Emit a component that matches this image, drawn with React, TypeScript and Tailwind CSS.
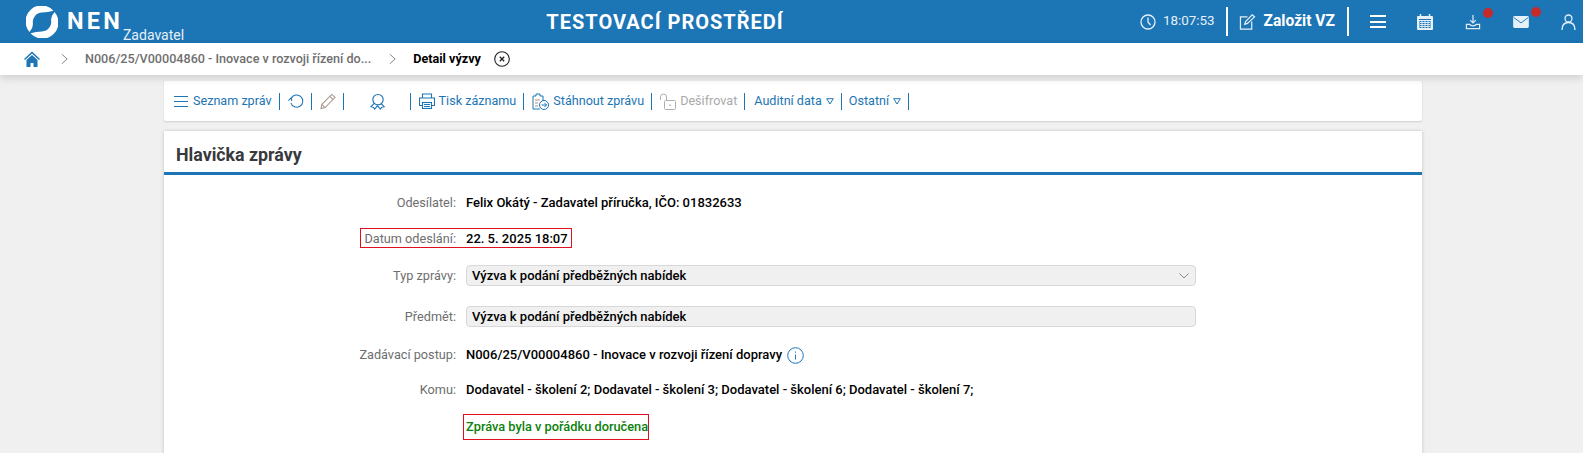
import React from 'react';

const Sep = ({ className }: { className: string }) => <span className={`w-px h-[17px] bg-[#1c75b5] shrink-0 ${className}`} />;

const Logo = () => (
  <svg width="32" height="32" viewBox="0 0 32 32" fill="white">
    <path d="M3.500 26A16 16 0 0 1 27.500 4.800Q22 6.500 16 6.500A9.500 9.500 0 0 0 7 18Q7 22 3.500 26z" />
    <path d="M3.500 26A16 16 0 0 1 27.500 4.800Q22 6.500 16 6.500A9.500 9.500 0 0 0 7 18Q7 22 3.500 26z" transform="rotate(180 16 16)" />
  </svg>
);

const Row = ({ label, children, className }: { label: string; children: React.ReactNode; className: string }) => (
  <div className={`flex items-center ${className}`}>
    <span className="w-[302px] pr-[10px] text-right text-[12.7px] text-[#6e6e6e] shrink-0">{label}</span>
    {children}
  </div>
);

const Box = ({ children }: { children?: React.ReactNode }) => (
  <div className="w-[730px] h-[21px] flex items-center justify-between pl-[5px] pr-[6px] bg-[#f0f0f0] border border-[#d8d8d8] rounded-[4px] font-medium text-black">
    {children}
  </div>
);

export default function App() {
  return (
    <div className="h-[453px] overflow-hidden bg-[#f0f0f0] text-[13px] font-['Roboto',sans-serif]">
      <header className="h-[43px] bg-[#1c75b5] flex items-center text-white">
        <div className="ml-[26px] flex items-center">
          <Logo />
          <span className="ml-[9px] text-[23.500px] leading-none font-bold tracking-[3.200px]">NEN</span>
          <span className="mt-[26px] text-[14px] leading-none text-[#e6f0f8]">Zadavatel</span>
        </div>
        <div className="flex-1 pl-[6px] text-center text-[20px] font-bold tracking-[1px]">TESTOVACÍ PROSTŘEDÍ</div>
        <div className="flex items-center mr-[7px]">
          <svg width="16" height="16" viewBox="0 0 16 16" fill="none" stroke="#e6f0f8" strokeWidth="1.300">
            <circle cx="8" cy="8" r="7" />
            <path d="M8 3.500V8l2.500 3" />
          </svg>
          <span className="ml-[7px] text-[13.400px] text-[#e6f0f8]">18:07:53</span>
          <span className="ml-[11px] w-[2px] h-[29px] bg-white" />
          <svg className="ml-[11px]" width="17" height="16" viewBox="0 0 18 17" fill="none" stroke="#e6f0f8" strokeWidth="1.300">
            <path d="M9 3H1.500v13h12V8" />
            <path d="M6 11l1-3 7-7 2.500 2-7.500 7z" />
          </svg>
          <span className="ml-[8px] text-[15.600px] font-bold">Založit VZ</span>
          <span className="ml-[12px] w-[2px] h-[29px] bg-white" />
          <span className="ml-[21px] w-[16px] h-[13px] flex flex-col justify-between">
            <span className="h-[2px] bg-white" />
            <span className="h-[2px] bg-white" />
            <span className="h-[2px] bg-white" />
          </span>
          <svg className="ml-[31px]" width="16" height="16" viewBox="0 0 16 16">
            <rect x="0" y="2" width="16" height="14" rx="1" fill="#e6f0f8" />
            <path d="M3.500 0v3M12.500 0v3" stroke="#e6f0f8" strokeWidth="1.500" />
            <path d="M2 5.500h12" stroke="#1c75b5" strokeWidth="1" />
            <rect x="2.500" y="7" width="11" height="7" fill="#1c75b5" />
            <path d="M3 8.500h10M3 10.500h10M3 12.500h10M5 7v7M8 7v7M11 7v7" stroke="#e6f0f8" strokeWidth="0.900" />
          </svg>
          <div className="ml-[32px] relative">
            <svg width="16" height="16" viewBox="0 0 16 17" fill="none" stroke="#dfeaf3" strokeWidth="1.300">
              <path d="M8 1v8M5 6.500L8 9.500 11 6.500" />
              <path d="M1 11v4.500h14V11H11.500c-.5 1-1 1.500-3.500 1.500S5 12 4.500 11z" />
            </svg>
            <span className="absolute -right-[12px] -top-[6px] w-[10px] h-[10px] rounded-full bg-[#c62a2a]" />
          </div>
          <div className="ml-[31px] relative">
            <svg width="18" height="12" viewBox="0 0 17 13">
              <rect width="17" height="13" rx="1.500" fill="#e6f0f8" />
              <path d="M0.500 1.500L8.500 7.500 16.500 1.500" fill="none" stroke="#1c75b5" strokeWidth="1" />
            </svg>
            <span className="absolute -right-[11px] -top-[9px] w-[10px] h-[10px] rounded-full bg-[#c62a2a]" />
          </div>
          <svg className="ml-[31px]" width="15" height="16" viewBox="0 0 15 16" fill="none" stroke="#e6f0f8" strokeWidth="1.300">
            <circle cx="7.500" cy="4.500" r="3.500" />
            <path d="M1 16c0-5 2.500-7.500 6.500-7.500S14 11 14 16" />
          </svg>
        </div>
      </header>

      <nav className="relative h-[32px] bg-white flex items-center shadow-[0_3px_8px_rgba(0,0,0,0.14)] font-medium text-[12.600px]">
        <svg className="ml-[24px]" width="16" height="16" viewBox="0 0 16 16">
          <path d="M8 0.500L0 8l1 1 7-6.500L15 9l1-1z" fill="#1c75b5" />
          <path d="M2.500 9L8 4l5.500 5v7H9.500v-4h-3v4H2.500z" fill="#1c75b5" />
        </svg>
        <svg className="ml-[21px]" width="7" height="12" viewBox="0 0 8 12" fill="none" stroke="#777" strokeWidth="1">
          <path d="M1 0.500L7 6 1 11.500" />
        </svg>
        <span className="ml-[17px] text-[#6f6f6f]">N006/25/V00004860 - Inovace v rozvoji řízení do...</span>
        <svg className="ml-[18px]" width="7" height="12" viewBox="0 0 8 12" fill="none" stroke="#777" strokeWidth="1">
          <path d="M1 0.500L7 6 1 11.500" />
        </svg>
        <span className="ml-[17px] text-black font-bold">Detail výzvy</span>
        <svg className="ml-[13px]" width="16" height="16" viewBox="0 0 16 16" fill="none" stroke="#222" strokeWidth="1.100">
          <circle cx="8" cy="8" r="7.300" />
          <path d="M5.800 5.800l4.400 4.400M10.200 5.800l-4.400 4.400" strokeWidth="1.300" />
        </svg>
      </nav>

      <main className="w-[1258px] ml-[164px] pt-[6px]">
        <div className="h-[40px] bg-white rounded-[2px] shadow-[0_1px_2px_rgba(0,0,0,0.14)] flex items-center pl-[10px] text-[12.600px] text-[#1c75b5]">
          <span className="w-[14px] h-[11px] flex flex-col justify-between">
            <span className="h-px bg-[#1c75b5]" />
            <span className="h-px bg-[#1c75b5]" />
            <span className="h-px bg-[#1c75b5]" />
          </span>
          <span className="ml-[5px]">Seznam zpráv</span>
          <Sep className="ml-[7px]" />
          <svg className="ml-[8px]" width="16" height="16" viewBox="0 0 17 16" fill="none" stroke="#1c75b5" strokeWidth="1.100">
            <path d="M3.500 5A6.500 6.500 0 1 1 3 10" />
            <path d="M0.500 7.500L3.500 4.500 4 8" />
          </svg>
          <Sep className="ml-[7px]" />
          <svg className="ml-[8px]" width="16" height="17" viewBox="0 0 17 17" fill="none" stroke="#a8988f" strokeWidth="1.100">
            <path d="M1 16l1-4.500L12.500 1 16 4 5.500 15z" />
            <path d="M2 11.500L5.500 15M10.500 3L14 6.500" />
          </svg>
          <Sep className="ml-[7px]" />
          <svg className="ml-[26px]" width="16" height="17" viewBox="0 0 17 17" fill="none" stroke="#1c75b5" strokeWidth="1.200">
            <circle cx="8.500" cy="6.500" r="5.500" />
            <path d="M4.500 10.500L1 14l2.500.5L5 16.500 8 13l3 3.500 1.500-2 2.500-.5-3.500-3.500" />
          </svg>
          <Sep className="ml-[24px]" />
          <svg className="ml-[8px]" width="16" height="16" viewBox="0 0 16 16" fill="none" stroke="#1c75b5" strokeWidth="1.100">
            <path d="M3.500 5V1h9v4M3.500 12.500H.5V5h15v7.500h-3" />
            <rect x="3.500" y="9.500" width="9" height="6" />
            <path d="M5 11.500h6M5 13.500h6" />
          </svg>
          <span className="ml-[4px]">Tisk záznamu</span>
          <Sep className="ml-[7px]" />
          <svg className="ml-[8px]" width="17" height="17" viewBox="0 0 17 17" fill="none" stroke="#1c75b5" strokeWidth="1">
            <path d="M8 16H1V3h3V1h4v2h3v5" />
            <path d="M3 7h5M3 10h3M3 13h3" stroke="#b08f82" />
            <circle cx="12" cy="12" r="4.500" />
            <path d="M9.500 12h5M12.500 10l2 2-2 2" />
          </svg>
          <span className="ml-[4px]">Stáhnout zprávu</span>
          <Sep className="ml-[7px]" />
          <svg className="ml-[8px]" width="16" height="17" viewBox="0 0 16 17" fill="none" stroke="#b0aeae" strokeWidth="1">
            <rect x="4.500" y="7.500" width="11" height="9" rx="1" />
            <path d="M.500 7V4a3 3 0 0 1 6 0v3.500" />
            <path d="M10 11.500v1.500" strokeWidth="1.500" />
          </svg>
          <span className="ml-[4px] text-[#a9a9a9]">Dešifrovat</span>
          <Sep className="ml-[7px]" />
          <span className="ml-[9px]">Auditní data</span>
          <svg className="ml-[4px]" width="8" height="7" viewBox="0 0 8 7" fill="none" stroke="#1c75b5" strokeWidth="1">
            <path d="M0.700 0.700h6.600L4 6z" />
          </svg>
          <Sep className="ml-[7px]" />
          <span className="ml-[7px]">Ostatní</span>
          <svg className="ml-[4px]" width="8" height="7" viewBox="0 0 8 7" fill="none" stroke="#1c75b5" strokeWidth="1">
            <path d="M0.700 0.700h6.600L4 6z" />
          </svg>
          <Sep className="ml-[7px]" />
        </div>

        <section className="mt-[10px] h-[400px] bg-white shadow-[-1px_0_3px_rgba(0,0,0,0.1),1px_0_3px_rgba(0,0,0,0.1)]">
          <h2 className="h-[44px] pt-[13px] pl-[12px] text-[17.800px] leading-[22px] font-bold text-[#37393d] border-b-[3px] border-[#1c75b5]">Hlavička zprávy</h2>
          <div className="pt-[18px]">
            <Row label="Odesílatel:" className="h-[20px]">
              <span className="font-medium text-black">Felix Okátý - Zadavatel příručka, IČO: 01832633</span>
            </Row>
            <Row label="Datum odeslání:" className="h-[20px] pt-[2px] mt-[15px] relative">
              <span className="font-medium text-black">22. 5. 2025 18:07</span>
              <span className="absolute left-[196px] top-0 w-[212px] h-[20px] border border-[#e2101f]" />
            </Row>
            <Row label="Typ zprávy:" className="h-[21px] mt-[17px]">
              <Box>
                Výzva k podání předběžných nabídek
                <svg width="10" height="6" viewBox="0 0 10 6" fill="none" stroke="#888" strokeWidth="1">
                  <path d="M0.500 0.500L5 5 9.500 0.500" />
                </svg>
              </Box>
            </Row>
            <Row label="Předmět:" className="h-[21px] mt-[20px]">
              <Box>Výzva k podání předběžných nabídek</Box>
            </Row>
            <Row label="Zadávací postup:" className="h-[20px] mt-[18px]">
              <span className="font-medium text-black">N006/25/V00004860 - Inovace v rozvoji řízení dopravy</span>
              <svg className="ml-[5px]" width="17" height="17" viewBox="0 0 17 17" fill="none" stroke="#1c75b5" strokeWidth="1">
                <circle cx="8.500" cy="8.500" r="7.800" />
                <path d="M8.500 7.500v5M8.500 4.500v1.200" />
              </svg>
            </Row>
            <Row label="Komu:" className="h-[20px] mt-[15px]">
              <span className="font-medium text-black">Dodavatel - školení 2; Dodavatel - školení 3; Dodavatel - školení 6; Dodavatel - školení 7;</span>
            </Row>
            <div className="ml-[299px] mt-[14px] w-[186px] h-[26px] pl-[2px] pb-[1px] flex items-center whitespace-nowrap border border-[#e2101f] text-[12.800px] font-medium text-[#0c7f0c]">
              Zpráva byla v pořádku doručena
            </div>
          </div>
        </section>
      </main>
    </div>
  );
}
